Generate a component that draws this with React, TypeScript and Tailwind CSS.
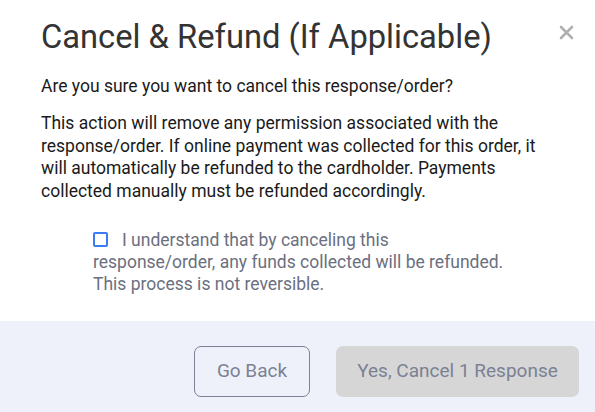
import React from 'react'

const App = () => {
  return (
    <div className="w-[595px] h-[412px] bg-white flex flex-col overflow-hidden" style={{ fontFamily: 'Roboto, sans-serif' }}>
      {/* Header + body */}
      <div className="relative flex-1 pl-[41px] pr-[30px]">
        <h1 className="text-[32.7px] leading-[38px] text-[#333333] pt-[18px]">Cancel &amp; Refund (If Applicable)</h1>
        <button className="absolute right-[21px] top-[25px] text-[#b0b0b0]" aria-label="Close">
          <svg width="15" height="15" viewBox="0 0 15 15">
            <path d="M2 2 L13 13 M13 2 L2 13" stroke="currentColor" strokeWidth="2.6" strokeLinecap="round" />
          </svg>
        </button>
        <p className="mt-[19px] text-[17.5px] leading-[22px] text-[#1a1a1a]">Are you sure you want to cancel this response/order?</p>
        <p className="mt-[15px] text-[17.5px] leading-[22.5px] text-[#1a1a1a]">
          This action will remove any permission associated with the response/order. If online payment was collected for this order, it will automatically be refunded to the cardholder. Payments collected manually must be refunded accordingly.
        </p>
        <label className="block ml-[52px] w-[412px] mt-[27px] text-[17.5px] leading-[22px] text-[#6b6f80]">
          <span className="inline-block align-[-1px] w-[15px] h-[15px] border-2 border-[#3b7cf5] rounded-[2px] mr-[14px]" />
          I understand that by canceling this response/order, any funds collected will be refunded. This process is not reversible.
        </label>
      </div>

      {/* Footer */}
      <div className="h-[91px] bg-[#eef1f9] flex justify-end items-start pt-[25px] pr-[16px] gap-[26px]">
        <button className="w-[116px] h-[51px] rounded-[7px] border border-[#7c8296] text-[19px] text-[#7b8194]">Go Back</button>
        <button className="w-[243px] h-[51px] rounded-[7px] bg-[#d6d6d6] text-[19px] text-[#7b8194]">Yes, Cancel 1 Response</button>
      </div>
    </div>
  )
}

export default App
